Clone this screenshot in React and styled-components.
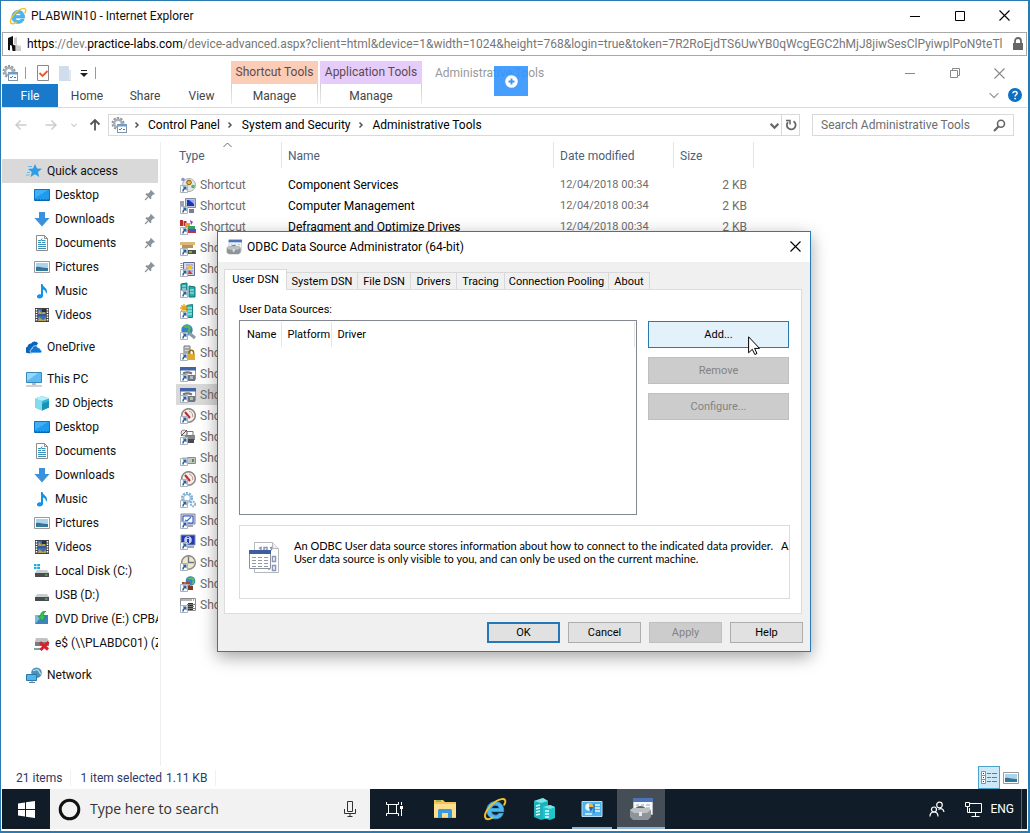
import React from "react";
import styled, { createGlobalStyle, css } from "styled-components";

const ui = `Roboto, "Open Sans", "Liberation Sans", sans-serif`;
const humanist = `"Open Sans", "Noto Sans", sans-serif`;
const narrow = `Lato, "Liberation Sans", sans-serif`;

const GlobalStyle = createGlobalStyle`
  *, *::before, *::after { box-sizing: border-box; }
  body { margin: 0; background: #fff; font: 12px/16px ${ui}; color: #111; }
  button, input { font: inherit; color: inherit; }
  button { padding: 0; border: 0; background: none; }
  a { color: inherit; text-decoration: none; }
  svg { display: block; flex: none; }
`;

/* ---------- browser window ---------- */

const Frame = styled.div`
  position: relative;
  min-height: 100vh;
  display: flex;
  flex-direction: column;
  border: 1px solid #2b7bb0;
  border-right-width: 2px;
  border-bottom-width: 2px;
  padding: 0 1px 2px;
  background: #fff;
  overflow: hidden;
`;

const TitleBar = styled.header`
  display: flex;
  align-items: center;
  height: 31px;
  padding: 0 0 2px 7px;
`;

const WindowTitle = styled.h1`
  flex: 1;
  margin: 0 0 0 4px;
  font: 12px/16px ${ui};
`;

const ButtonSet = styled.div`
  display: flex;
  padding-right: ${(p) => p.$inset || 0}px;
`;

const WindowButton = styled.button`
  width: 45px;
  height: 24px;
  display: grid;
  place-items: center;
  color: ${(p) => p.$color || "#000"};
`;

const UrlBar = styled.div`
  display: flex;
  align-items: center;
  height: 24px;
  padding: 0 1px 0 4px;
  border: 1px solid #a8a8a8;
  color: #777;
`;

const Url = styled.div`
  flex: 1;
  min-width: 0;
  margin: 0 4px;
  overflow: hidden;
  white-space: nowrap;
  line-height: 20px;
  b { font-weight: 400; color: #000; }
`;

/* ---------- explorer: ribbon ---------- */

const Ribbon = styled.div`
  display: flex;
  height: 52px;
  padding-top: 5px;
  border-bottom: 1px solid #dadbdc;
  color: #444;
`;

const RibbonStart = styled.div`
  width: 229px;
  flex: none;
`;

const QuickTools = styled.div`
  display: flex;
  align-items: center;
  height: 23px;
`;

const ToolButton = styled.button`
  width: 16px;
  margin-right: ${(p) => p.$gap || 0}px;
  svg { margin: 0 auto; }
`;

const ToolDivider = styled.span`
  width: 1px;
  height: 12px;
  margin-right: ${(p) => p.$gap || 0}px;
  background: #999;
`;

const TabRow = styled.nav`
  display: flex;
  height: 23px;
`;

const RibbonTab = styled.button`
  width: ${(p) => p.$width}px;
  height: 23px;
  color: #444;
  ${(p) => p.$file && css`background: #1979ca; color: #fff;`}
`;

const ToolGroup = styled.div`
  width: ${(p) => p.$width}px;
  flex: none;
  margin-right: ${(p) => p.$gap}px;
  text-align: center;
`;

const ToolGroupName = styled.div`
  height: 23px;
  line-height: 22px;
  background: ${(p) => p.$tint};
  color: #5b4a4f;
`;

const ToolGroupTab = styled.button`
  width: 100%;
  height: 20px;
  padding-top: 3px;
  color: #444;
  border-left: 1px solid;
  border-right: 1px solid;
  border-image: linear-gradient(#ccc, #eee) 1;
`;

const FolderTitle = styled.div`
  flex: 1;
  line-height: 24px;
  color: #999;
`;

const RibbonEnd = styled.div`
  display: flex;
  flex-direction: column;
  align-items: flex-end;
`;

const RibbonHelp = styled.div`
  display: flex;
  align-items: center;
  gap: 9px;
  height: 20px;
  padding-right: 5px;
  color: #999;
`;

const BadgeButton = styled.button`
  position: absolute;
  left: 493px;
  top: 65px;
  width: 34px;
  height: 30px;
  display: grid;
  place-items: center;
  background: rgba(50, 148, 255, 0.9);
`;

/* ---------- explorer: address row ---------- */

const NavRow = styled.div`
  display: flex;
  align-items: center;
  height: 34px;
  padding: 0 13px 0 13px;
`;

const NavButton = styled.button`
  width: ${(p) => p.$width || 12}px;
  margin-right: ${(p) => p.$gap}px;
  color: ${(p) => p.$color || "#ccc"};
`;

const Breadcrumbs = styled.div`
  flex: 1;
  display: flex;
  align-items: center;
  height: 22px;
  margin-right: 12px;
  padding-left: 2px;
  border: 1px solid #d9d9d9;
  color: #000;
  svg + svg { margin: 0 7px 0 6px; }
  a + svg { margin: 0 8px 0 6px; }
  button { color: #666; }
`;

const Spacer = styled.span`
  flex: 1;
`;

const Refresh = styled.button`
  width: 18px;
  height: 20px;
  display: grid;
  place-items: center;
  margin-left: 2px;
  border-left: 1px solid #d9d9d9;
`;

const SearchBox = styled.label`
  display: flex;
  align-items: center;
  width: 202px;
  height: 22px;
  padding: 0 7px 0 8px;
  border: 1px solid #d9d9d9;
  color: #666;
`;

const SearchInput = styled.input`
  flex: 1;
  min-width: 0;
  padding: 0;
  border: 0;
  outline: 0;
  background: none;
  font: ${(p) => (p.$large ? `14px/20px ${humanist}` : `12px/16px ${ui}`)};
  &::placeholder { color: ${(p) => (p.$large ? "#333" : "#6d6d6d")}; opacity: 1; }
`;

/* ---------- explorer: body ---------- */

const Panes = styled.main`
  flex: 1;
  display: flex;
  min-height: 0;
`;

const Sidebar = styled.nav`
  width: 159px;
  flex: none;
  padding: 17px 2px 0 0;
  border-right: 1px solid #eee;
`;

const Branch = styled.ul`
  list-style: none;
  margin: 0 0 8px;
  padding: 0;
`;

const Place = styled.a`
  display: flex;
  align-items: center;
  gap: 5px;
  height: 24px;
  padding-left: ${(p) => (p.$nested ? 32 : 24)}px;
  padding-right: ${(p) => (p.$pinned ? 2 : 0)}px;
  white-space: nowrap;
  overflow: hidden;
  background: ${(p) => (p.$current ? "#d9d9d9" : "none")};
  span { flex: 1; min-width: 0; overflow: hidden; }
`;

const ListPane = styled.section`
  flex: 1;
  min-width: 0;
  padding-left: 15px;
`;

const FileTable = styled.table`
  table-layout: fixed;
  width: 578px;
  border-collapse: collapse;
`;

const ColumnHead = styled.th`
  position: relative;
  width: ${(p) => p.$width}px;
  height: 32px;
  padding: 0 7px 4px ${(p) => p.$inset || 6}px;
  text-align: left;
  font-weight: 400;
  color: #4c607a;
  background: linear-gradient(#e5e5e5, #e5e5e5) right 0 / 1px 26px no-repeat;
`;

const SortMark = styled.svg`
  position: absolute;
  left: 47px;
  top: 0;
`;

const FileRow = styled.tr`
  background: ${(p) => (p.$selected ? "#d9d9d9" : "none")};
`;

const Cell = styled.td`
  height: 21px;
  padding: 0 7px 0 6px;
  color: ${(p) => (p.$strong ? "#000" : "#6d6d6d")};
  text-align: ${(p) => p.$align || "left"};
  font-size: ${(p) => (p.$compact ? 11 : 12)}px;
`;

const TypeCell = styled.td`
  height: 21px;
  padding: 0 0 0 4px;
  color: #6d6d6d;
  div { display: flex; align-items: center; gap: 4px; }
`;

const StatusBar = styled.footer`
  display: flex;
  align-items: center;
  height: 23px;
  padding: 0 5px 0 14px;
  color: #2b3a66;
`;

const StatusText = styled.span`
  padding-right: ${(p) => (p.$bare ? 3 : 8)}px;
  margin-right: ${(p) => p.$gap || 0}px;
  border-right: 1px solid ${(p) => (p.$bare ? "transparent" : "#f0f0f0")};
`;

const ViewButton = styled.button`
  display: grid;
  place-items: center;
  width: 22px;
  height: 23px;
  ${(p) => p.$on && css`border: 1px solid #4ba3cc; background: #cde9f7;`}
`;

/* ---------- taskbar ---------- */

const Taskbar = styled.div`
  display: flex;
  height: 40px;
  background: #101d29;
  color: #fff;
`;

const TaskButton = styled.button`
  display: grid;
  place-items: center;
  width: ${(p) => p.$width || 49}px;
  height: 40px;
  background: ${(p) => (p.$active ? "#454d57" : "none")};
  ${(p) => p.$open && css`box-shadow: inset 0 -2px #8fb8d8;`}
  ${(p) => p.$open && !p.$active && css`margin: 0 5px 0 4px;`}
`;

const TaskSearch = styled.label`
  display: flex;
  align-items: center;
  gap: 9px;
  width: 320px;
  padding: 0 12px 0 8px;
  background: #f2f2f2;
  color: #333;
`;

const Tray = styled.div`
  flex: 1;
  display: flex;
  align-items: center;
  justify-content: flex-end;
  padding-right: 5px;
  gap: 20px;
  span { margin-left: -12px; padding-right: 7px; border-right: 1px solid #59636c; line-height: 40px; }
`;

/* ---------- ODBC dialog ---------- */

const Dialog = styled.section`
  position: absolute;
  left: 216px;
  top: 230px;
  width: 594px;
  border: 1px solid #2a7ab8;
  background: #f0f0f0;
  box-shadow: 0 5px 16px rgba(0, 0, 0, 0.36);
  font: 11px/13px ${ui};
  color: #000;
`;

const DialogHeader = styled.header`
  display: flex;
  align-items: center;
  height: 30px;
  padding: 0 0 1px 8px;
  background: #fff;
`;

const DialogTitle = styled.h2`
  flex: 1;
  margin: 0 0 0 5px;
  font: 12px/16px ${ui};
`;

const DialogClose = styled.button`
  width: 30px;
  height: 28px;
  display: grid;
  place-items: center;
`;

const DialogBody = styled.div`
  padding: 7px 8px 8px 6px;
`;

const Tabs = styled.div`
  display: flex;
  align-items: flex-end;
  height: 20px;
`;

const Tab = styled.button`
  width: ${(p) => p.$width}px;
  height: 17px;
  border: 1px solid #d9d9d9;
  border-width: 1px 1px 0 0;
  background: #f0f0f0;
  ${(p) => p.$active && css`
    height: 21px;
    margin-bottom: -1px;
    padding-bottom: 2px;
    border-left-width: 1px;
    background: #fff;
    z-index: 1;
  `}
`;

const TabPanel = styled.div`
  padding: 12px 11px 14px 14px;
  border: 1px solid #dcdcdc;
  background: #fff;
`;

const PanelLabel = styled.div`
  margin-bottom: 3px;
  line-height: 15px;
`;

const SourceArea = styled.div`
  display: flex;
  gap: 11px;
`;

const SourceList = styled.div`
  flex: 1;
  height: 195px;
  padding: 1px;
  border: 1px solid #828790;
`;

const SourceTable = styled.table`
  width: 100%;
  table-layout: fixed;
  border-collapse: collapse;
`;

const SourceHead = styled.th`
  width: ${(p) => p.$width}px;
  height: 25px;
  padding: 0 0 0 6px;
  border-right: 1px solid #e5e5e5;
  text-align: left;
  font-weight: 400;
`;

const ActionColumn = styled.div`
  display: flex;
  flex-direction: column;
  gap: 9px;
  width: 142px;
  padding: 1px 1px 0 0;
`;

const PushButton = styled.button`
  width: ${(p) => (p.$small ? "73px" : "100%")};
  height: ${(p) => (p.$small ? 21 : 27)}px;
  border: 1px solid #adadad;
  background: #e1e1e1;
  &:disabled { background: #ccc; border-color: #bfbfbf; color: #838383; }
  ${(p) => p.$hot && css`border-color: #2a7ab0; background: #e3f1fb;`}
  ${(p) => p.$primary && css`border: 2px solid #2478b5;`}
`;

const Info = styled.div`
  display: flex;
  gap: 14px;
  height: 74px;
  margin-top: 10px;
  padding: 13px 8px;
  border: 1px solid #dcdcdc;
  p { margin: 0; white-space: pre; font-family: ${narrow}; }
  svg { margin-top: 3px; }
`;

const DialogActions = styled.div`
  display: flex;
  justify-content: flex-end;
  gap: 8px;
  padding-top: 8px;
  margin-right: -1px;
`;

const Pointer = styled.svg`
  position: absolute;
  left: 530px;
  top: 104px;
`;

/* ---------- icons ---------- */

const Icon = ({ size = 16, box = 16, children, ...rest }) => (
  <svg width={size} height={size} viewBox={`0 0 ${box} ${box}`} fill="none" aria-hidden="true" {...rest}>
    {children}
  </svg>
);

const IeIcon = ({ size = 18 }) => (
  <Icon size={size} box={24}>
    <path d="M20.6 14.6H8.4c.3 2.300 1.800 3.600 4 3.600 1.600 0 2.800-.6 3.500-1.800h4.300c-1.200 3.600-4.100 5.400-7.900 5.400-5 0-8.400-3.400-8.400-8.500 0-5 3.500-8.600 8.500-8.600 5.200 0 8.400 3.500 8.300 9.900zM8.500 11.500h7.700c-.2-2.100-1.600-3.300-3.700-3.300-2.200 0-3.600 1.200-4 3.300z" fill="#4db9ef" stroke="#3a9fdb" strokeWidth="1" />
    <path d="M3 21.500C-.8 18 6.500 8.200 13 4.300c4-2.400 8-3 9-1.300.7 1.200.2 3.100-.8 4.800" stroke="#f3c22b" strokeWidth="1.900" strokeLinecap="round" />
    <path d="M3 21.500c1.500 1.300 4 .6 6.500-1" stroke="#f3c22b" strokeWidth="1.900" strokeLinecap="round" />
  </Icon>
);

const SiteIcon = () => (
  <Icon>
    <path d="M1 2l5-2v15l-5-1z" fill="#111" />
    <path d="M3 9l3 1v5H3z" fill="#fff" />
    <path d="M4.500 8l4 1.500V15h-3z" fill="#111" />
    <path d="M7 2l3-1v8l4 1v5H9V8.500L7 8z" fill="#ccc" />
  </Icon>
);

const LockIcon = () => (
  <Icon size={14} box={14}>
    <path d="M4 6V4a3 3 0 016 0v2" stroke="#666" strokeWidth="1.800" />
    <rect x="2" y="6" width="10" height="7" fill="#666" />
  </Icon>
);

const MinimizeIcon = () => <Icon size={10} box={10}><path d="M0 5.500h10" stroke="currentColor" /></Icon>;
const MaximizeIcon = () => <Icon size={10} box={10}><path d="M.5.5h9v9h-9z" stroke="currentColor" /></Icon>;
const RestoreIcon = () => <Icon size={10} box={10}><path d="M.5 2.500h7v7h-7zM2.500 2.500v-2h7v7h-2" stroke="currentColor" /></Icon>;
const CloseIcon = () => <Icon size={11} box={11}><path d="M.5.5l10 10M10.500.5l-10 10" stroke="currentColor" strokeWidth="1.100" /></Icon>;

const AdminToolsIcon = () => (
  <Icon>
    <circle cx="7" cy="6.500" r="5" stroke="#8f989f" strokeWidth="3" strokeDasharray="2 1.140" />
    <circle cx="7" cy="6.500" r="3.800" stroke="#a9b1b7" strokeWidth="2.500" fill="#fff" />
    <rect x="6.500" y="7.500" width="9" height="8" fill="#fff" stroke="#7f95ac" />
    <path d="M6 8.500h10" stroke="#6f9fd0" strokeWidth="2" />
    <path d="M8 12l1 1 2-2M12 12.500h2" stroke="#3d78b8" />
  </Icon>
);

const PropertiesIcon = () => (
  <Icon>
    <path d="M2.500.5h11v15h-11z" fill="#fff" stroke="#8a8a8a" />
    <path d="M4.500 8l3 3 5-5" stroke="#e8572a" strokeWidth="1.800" />
  </Icon>
);

const NewFolderIcon = () => (
  <Icon><path d="M2 1h9l1 1v11l2 1v2H2z" fill="#cfdded" /><path d="M12 5h2v10h-2z" fill="#dfe8f2" /></Icon>
);

const CustomizeIcon = () => (
  <Icon size={8} box={8}><path d="M1 1.500h6" stroke="#222" /><path d="M0 4h8L4 8z" fill="#222" /></Icon>
);

const ArrowIcon = ({ turn = 0, weight = 1.5 }) => (
  <Icon size={12} box={12}>
    <path d="M11.500 6H1M5.500 1.500L1 6l4.500 4.500" stroke="currentColor" strokeWidth={weight} transform={`rotate(${turn} 6 6)`} />
  </Icon>
);

const ChevronIcon = ({ side, weight = 1.5, size = 8 }) => (
  <Icon size={size} box={8}>
    <path d={side ? "M2.500 1.500L5 4 2.500 6.500" : "M.5 2.500L4 6l3.500-3.500"} stroke={side ? "#555" : "currentColor"} strokeWidth={weight} />
  </Icon>
);

const RefreshIcon = () => (
  <Icon size={12} box={12}><path d="M8.500 2.200A4.400 4.400 0 1 1 3 3" stroke="currentColor" strokeWidth="1.800" /><path d="M1 1.500h4v4" stroke="currentColor" strokeWidth="1.500" /></Icon>
);

const SearchIcon = () => (
  <Icon size={13} box={13}><circle cx="8" cy="4.700" r="3.500" stroke="#666" strokeWidth="1.600" /><path d="M5.500 7.500l-4.500 4.500" stroke="#666" strokeWidth="2.200" /></Icon>
);

const HelpIcon = () => (
  <Icon size={14} box={14}>
    <circle cx="7" cy="7" r="7" fill="#0e70c4" />
    <path d="M4.900 5.300c.1-2.500 4.300-2.400 4.200 0 0 1.500-2 1.500-2 3.200" stroke="#fff" strokeWidth="1.500" />
    <circle cx="7.100" cy="10.600" r=".9" fill="#fff" />
  </Icon>
);

const PlusIcon = () => (
  <Icon size={13} box={13}><circle cx="6.500" cy="6.500" r="6.300" fill="#fff" /><path d="M6.500 3.500v6M3.500 6.500h6" stroke="#3b97f5" strokeWidth="1.800" /></Icon>
);

const StarIcon = () => (
  <Icon><path d="M9 1l2 4.500 5 .2-4 3.200 1.200 5L9 11.300 4.500 14l1.300-5L2 6l5-.4z" fill="#2f9de4" /><path d="M1 9.500h3M0 12h3.500M2 3.500h4" stroke="#63b8ee" /></Icon>
);

const DesktopIcon = () => (
  <Icon><path d="M.5 2.500h15v11H.5z" fill="#1f9bee" stroke="#0b74c4" /><path d="M1 13h14" stroke="#0a4e86" strokeDasharray="2 1" /><path d="M1 11l13-8H1z" fill="#3fb0f7" /></Icon>
);

const DownloadsIcon = () => (
  <Icon><path d="M5 1h6v6h4.500L8 15.500.5 7H5z" fill="#3b92dc" /></Icon>
);

const DocumentsIcon = () => (
  <Icon>
    <path d="M2.500.5h8l3 3v12h-11z" fill="#fff" stroke="#8c8c8c" />
    <path d="M10.500.5v3h3" stroke="#8c8c8c" />
    <path d="M4 5.500h2M7.500 5.500h4M4 7.500h3M8 7.500h3.500M4 9.500h8M4 11.500h8M4 13.500h8" stroke="#3b8fb8" />
    <path d="M6 6.500l2-3" stroke="#3b8fb8" />
  </Icon>
);

const PicturesIcon = () => (
  <Icon>
    <path d="M.5 2.500h15v11H.5z" fill="#fff" stroke="#9a9a9a" />
    <path d="M2 4h12v8H2z" fill="#a8d4ee" />
    <path d="M2 8c4-1 7 1.500 12 1v3H2z" fill="#426e8b" />
    <path d="M2 10.500c4-1 8 0 12 0V12H2z" fill="#2a7ca0" />
  </Icon>
);

const MusicIcon = () => (
  <Icon><path d="M7 1h1.500c.5 3 4.500 3.500 4.500 7.500 0 1-.5 2-1 2.500 0-3-1.500-4-3-4.500V13c0 1.500-1.700 2.500-3.500 2.500S2.500 14.500 3 13c.5-1.400 2.500-2 4-1.500z" fill="#1592e6" /></Icon>
);

const VideosIcon = () => (
  <Icon>
    <path d="M1 1h14v14H1z" fill="#444" />
    <path d="M2.500 2v12M13.500 2v12" stroke="#fff" strokeWidth="1.500" strokeDasharray="1.500 1" />
    <path d="M4 2h8v5.500H4zM4 8.500h8V14H4z" fill="#3c6fb8" />
    <path d="M5 3l3 3 3-3v4H4zM5 10l4 3 3-2v3H4z" fill="#b7a04e" />
    <path d="M8 2h4v3H8z" fill="#202f58" />
  </Icon>
);

const OneDriveIcon = () => (
  <Icon>
    <path d="M6 13.500H2.500a2.500 2.500 0 01-.3-5C2 6 4 5 5.500 5.300 6.500 3 10 2.500 11.500 5" stroke="#0a64b8" strokeWidth="1.500" fill="#0a64b8" />
    <path d="M6 14c-2.500 0-2.500-3.800 0-4 0-3.500 5-4.500 6-1.200 1.600-.3 2.600.7 2.400 2 2 .5 1.900 3.200-.2 3.200z" fill="#0f78d4" stroke="#fff" strokeWidth=".7" />
  </Icon>
);

const ThisPcIcon = () => (
  <Icon><path d="M.5 1.500h15v10H.5z" fill="#5cbcf2" stroke="#3a86b8" /><path d="M1 10l11-8H1z" fill="#93d8fb" /><path d="M6 12h4v2H6z" fill="#b4bcc2" /><path d="M0 15h16" stroke="#9aa5ac" /></Icon>
);

const ObjectsIcon = () => (
  <Icon><path d="M8 1l7 2.500v9L8 15.500 1 12.500v-9z" fill="#2eb6d4" /><path d="M1 3.500L8 6v9.500L1 12.500z" fill="#82dcec" /><path d="M8 1l7 2.500L8 6 1 3.500z" fill="#b8eef6" /><path d="M8 9l7-3v6.500l-7 3z" fill="#1594b6" /></Icon>
);

const driveBody = (
  <>
    <path d="M3 7h10l2 3H1z" fill="#c9cdd0" />
    <path d="M1 10h14v4H1z" fill="#484d50" />
    <path d="M11 12h2.500" stroke="#5fe06c" />
  </>
);

const LocalDiskIcon = () => (
  <Icon>{driveBody}<path d="M0 1h2.500v2H0zM3.200 1h2.800v2H3.200zM0 3.700h2.500V6H0zM3.200 3.700h2.800V6H3.200z" fill="#17b0d8" /></Icon>
);
const UsbIcon = () => <Icon>{driveBody}</Icon>;
const DvdIcon = () => (
  <Icon><path d="M1 4h13v9H1z" fill="#3e83bd" /><path d="M1 13l8-9H1z" fill="#7cb9e4" /><path d="M12 0C8 0 6.500 2 6.500 5H4l4 5 4-5H9.500c0-2 .8-3.500 2.500-5z" fill="#35c25a" stroke="#158a38" strokeWidth=".6" /></Icon>
);
const NetDriveIcon = () => (
  <Icon><path d="M2 3h11l2 3v5H1V6z" fill="#bfc3c6" /><path d="M1 7h14v4H1z" fill="#777d80" /><path d="M0 14h8" stroke="#7aa8a0" strokeWidth="2" /><path d="M6 7.500l8 7M14.500 7l-8 8" stroke="#d8202e" strokeWidth="3" /></Icon>
);
const NetworkIcon = () => (
  <Icon><circle cx="10.500" cy="5.800" r="5.300" fill="#4d8fb5" /><path d="M7 3c2 2 3-2 5 0s1 3 3 4" stroke="#a9d9ec" strokeWidth="1.500" /><path d="M.5 7.500h10v6H.5z" fill="#54b5ee" stroke="#2a78a8" /><path d="M3 15.500h6M6 13.500v2" stroke="#5f8499" /></Icon>
);
const PinIcon = () => (
  <Icon size={12} box={12}><path d="M7 1l4 4-1 .6-.8-.2-2 2 .2 2-1 .8-5-5 .9-1 2 .2 2-2-.2-.8z" fill="#8a939a" /><path d="M4 8l-3 3" stroke="#8a939a" strokeWidth="1.200" /></Icon>
);

/* Artwork of each administrative tool, under the shortcut arrow. */
const toolArt = {
  services: <><circle cx="9" cy="8" r="6.500" fill="#e3e6e2" stroke="#a9b0ab" /><circle cx="9" cy="5.500" r="2.300" fill="#e9b52c" stroke="#7d5f18" /><circle cx="3" cy="2.500" r="1.800" fill="#8c8fd6" /><circle cx="13" cy="9.500" r="1.800" fill="#53b35a" /></>,
  computer: <><path d="M5.500.5h10v9h-10z" fill="#bfc6da" stroke="#848ba6" /><path d="M7 2h7v6H7z" fill="#1c35b5" /><path d="M9 2h5v4z" fill="#8fa8f0" /><path d="M0 3h4v8H0z" fill="#9ba3b8" /><path d="M9 11h5v4H9z" fill="#777f90" /></>,
  defrag: <><path d="M0 1h3v6H0zM3.500 2h3v5h-3z" fill="#b52f2f" /><path d="M5 4h5v4H5z" fill="#e8a02c" /><path d="M10 1l3 2-2 3z" fill="#9a33b0" /><path d="M8 7h7v3H8z" fill="#3e9e62" /><path d="M8 10h8v4H8z" fill="#c03348" /><path d="M9 11.500h6" stroke="#3d56c4" strokeWidth="1.500" /></>,
  cleanup: <><path d="M0 2h15v3H0z" fill="#d9b878" /><path d="M2 5h11v3H2z" fill="#b89354" /><path d="M7 10h9v4H7z" fill="#4e5444" /><path d="M9 12h3" stroke="#9ccd3a" strokeWidth="1.500" /></>,
  events: <><path d="M3.500 1.500h11v13h-11z" fill="#d3d7ea" stroke="#626a94" /><path d="M6 4h7M6 7h7M6 10h7" stroke="#7f88b6" /><circle cx="10" cy="6" r="2.300" fill="#f2c12e" /><path d="M9 9l4 4H8z" fill="#d43a2b" /><path d="M1.500 2v12" stroke="#7781a0" strokeDasharray="1 1" strokeWidth="2" /></>,
  iscsi: <><path d="M1 2l6-1v12H1zM9 4l6 1v10H9z" fill="#28a9ab" stroke="#0f7274" /><path d="M2 4h4M2 7h4M10 8h4M10 11h4" stroke="#bdf4f0" /></>,
  policy: <><path d="M6.500 2.500l6-1v13h-6z" fill="#33b9b6" stroke="#15807f" /><path d="M8 5h4M8 8h4M8 11h4" stroke="#c8f6f2" /><path d="M4 1v8M0 5h8M1.200 2.200l5.600 5.600M6.800 2.200L1.200 7.800" stroke="#e2a51c" strokeWidth="1.300" /></>,
  web: <><circle cx="7" cy="6" r="5.700" fill="#2f86c2" /><path d="M4 2c3 2 3-1 5 1s-1 3 0 5" stroke="#59b452" strokeWidth="2.500" /><path d="M9 9l6 5" stroke="#909aa2" strokeWidth="3" /></>,
  security: <><path d="M4 1h6v9H4z" fill="#d6d9dc" stroke="#6c7277" /><path d="M5 4h4M5 7h4" stroke="#6c7277" /><path d="M9 9V7.500a2.300 2.300 0 014.600 0V9" stroke="#94700f" strokeWidth="1.500" /><path d="M8 9h7v6H8z" fill="#e0aa2f" /></>,
  odbc: <><path d="M.5 1.500h15v12H.5z" fill="#fff" stroke="#8f98ab" /><path d="M0 1h16v3.500H0z" fill="#3f65a8" /><path d="M3 7.500c3-1.500 6-1.500 9 0" stroke="#777" strokeWidth="2" /><path d="M7 9h8v6H7z" fill="#70777e" /><path d="M10 10h3v3h-3z" fill="#b4bac0" /></>,
  gauge: <><circle cx="8.500" cy="7.500" r="6.800" fill="#f2efec" stroke="#8d8780" strokeWidth="1.500" /><path d="M5 4l5 6" stroke="#c4282c" strokeWidth="2" /><path d="M9 3c3 1 4 3 3.500 6" stroke="#c99" /></>,
  printer: <><path d="M5 6h10v5H5z" fill="#86898b" /><path d="M7 2.500h6v4H7z" fill="#fff" stroke="#777" /><path d="M8 10h6v4H8z" fill="#444c50" /><circle cx="4" cy="4" r="3" fill="#e8e8e8" stroke="#868686" /><path d="M1 7l6-6" stroke="#555" /></>,
  recovery: <><path d="M2 7h7l2 2v4H2z" fill="#d7dad8" /><path d="M7.500 7.500h8v6h-8z" fill="#c2c7c3" stroke="#888f8a" /><path d="M12 9h2v3h-2z" fill="#4e9650" /></>,
  gears: <><circle cx="7" cy="6" r="4.800" stroke="#7baed4" strokeWidth="2.500" strokeDasharray="2 1" /><circle cx="7" cy="6" r="3.300" stroke="#8dbbdc" strokeWidth="1.200" /><circle cx="13" cy="12" r="2.200" stroke="#7baed4" strokeWidth="2" strokeDasharray="1.500 .8" /></>,
  monitor: <><path d="M1 1h14v10H1z" fill="#cfd5e4" stroke="#7e86a0" /><path d="M3 3h10v7H3z" fill="#fff" stroke="#2540c0" /><path d="M5 7l2 1 4-4" stroke="#287ad4" strokeWidth="1.300" /><path d="M7 12h6v2H7z" fill="#9fa5b2" /></>,
  info: <><path d="M1 1h14v10H1z" fill="#2038b4" stroke="#8890a8" /><circle cx="8" cy="6" r="3.800" fill="#bfd1f8" /><path d="M8 5v4M8 3v1" stroke="#1a2da0" strokeWidth="1.800" /><path d="M7 12h7v2H7z" fill="#9fa5b2" /></>,
  clock: <><circle cx="8.500" cy="7.500" r="6.800" fill="#f5e8c0" stroke="#8d8d8d" strokeWidth="1.500" /><path d="M8.500 1.500v6h5.500" stroke="#5f7590" strokeWidth="1.300" /></>,
  firewall: <><circle cx="10.500" cy="5" r="4.800" fill="#3285c9" /><path d="M8 2c3 2 3-1 5 1s-1 3 0 5" stroke="#65bc55" strokeWidth="2" /><path d="M2 6h8v7H2z" fill="#a5492f" /><path d="M2 8.500h8M2 11h8M5 6v2M8 9v2" stroke="#dcb3a0" strokeWidth=".7" /><path d="M8 10h5v4H8z" fill="#863721" /></>,
  memory: <><path d="M.5 1.500h15v12H.5z" fill="#fff" stroke="#8a8a8a" /><path d="M1 3h11" stroke="#b5b5b5" strokeWidth="2" /><path d="M13 3h1" stroke="#555" /><path d="M8 6h5v7H8z" fill="#333" /><path d="M7 7.500h8M7 9.500h7M7 11.500h8" stroke="#777" /></>,
};

const ShortcutIcon = ({ kind }) => (
  <Icon>
    {toolArt[kind]}
    <path d="M.5 8.500h7v7h-7z" fill="#fff" stroke="#aab2bb" />
    <path d="M2.500 9.500h4v4l-1.300-1.300c-1 .4-1.400 1-1.400 2.300H2.300c0-1.800.4-2.800 1.600-3.600z" fill="#2b5f9e" />
  </Icon>
);

const ToolboxIcon = ({ size = 16 }) => (
  <Icon size={size} box={24}>
    <path d="M4.500 1.500h19v16h-19z" fill="#f7f8fb" stroke="#b7bcc9" />
    <path d="M4 1h20v4H4z" fill="#4c74b6" />
    <path d="M7 8h3M12 8h3M17 8h4M7 11h3M17 11h4M17 14h4" stroke="#9ba7bd" />
    <path d="M7 13c1-4 8-4 9 0" stroke="#5f666b" strokeWidth="2" />
    <path d="M1 13l3-2h14l4 2v7l-3 3H4l-3-3z" fill="#8e9498" />
    <path d="M1 13l3-2h14l4 2-4 3H5z" fill="#bcc1c4" />
    <path d="M10 15h3v4h-3z" fill="#e6e8ea" />
  </Icon>
);

const DataSourceIcon = () => (
  <Icon size={32} box={32}>
    <path d="M6.500.5h18l6 6v24h-24z" fill="#fff" stroke="#b5b8bd" />
    <path d="M24.500.5v6h6" fill="#eee" stroke="#b5b8bd" />
    <path d="M11 6.500l2-1v3M16 5.500h3v3h-3zM22 6l1.500-.5v3M24.500 14.500h3v5h-3zM24.500 23.500h3v5h-3zM21 24v4" stroke="#8996b8" strokeWidth="1.500" />
    <path d="M1.500 8.500h21v18h-21z" fill="#fff" stroke="#8a91a0" />
    <path d="M1 8h22v4H1z" fill="#3f5f9c" />
    <path d="M4 15.500h17M4 18.500h17M4 21.500h17M4 24.500h17" stroke="#9299a8" strokeDasharray="4 2" />
  </Icon>
);

const WindowsIcon = () => (
  <Icon size={17} box={17}><path d="M0 2.500l7-1V8H0zM8 1.300L17 0v8H8zM0 9h7v6.500l-7-1zM8 9h9v8l-9-1.300z" fill="#fff" /></Icon>
);
const CortanaIcon = () => <Icon size={23} box={23}><circle cx="11.500" cy="11.500" r="9.300" stroke="#111" strokeWidth="3" /></Icon>;
const MicIcon = () => (
  <Icon size={16}><path d="M5.500.5h5v10h-5zM2.500 8v4.500h11V8M8 12.500v3M5.500 15.500h5" stroke="#333" /></Icon>
);
const TaskViewIcon = () => (
  <Icon size={17} box={17}><path d="M2.500 3.500h8v9h-8zM.5 1v2.500h12V1M.5 15v-2.500h12V15M15.500 1v3M15.500 8v7" stroke="#fff" /><path d="M14 5h3v3h-3z" fill="#fff" /></Icon>
);
const FolderIcon = () => (
  <Icon size={22} box={22}><path d="M0 2h9l2 2h11v16H0z" fill="#f2c75a" /><path d="M0 6h22v13H0z" fill="#ffdf8d" /><path d="M4 20v-8l1-1h12l1 1v8h-4v-5H8v5z" fill="#3a9bdc" /><path d="M2 3h5" stroke="#4c9a64" /></Icon>
);
const ServerIcon = () => (
  <Icon size={22} box={22}><path d="M1 3l9-3 5 3v17l-7 2-7-3z" fill="#1db3bd" /><path d="M10 9l7-2 5 2v11l-5 2-7-2z" fill="#22c3cb" /><path d="M1 3l9-3 5 3-7 2zM10 9l7-2 5 2-5 2z" fill="#7ae6e6" /><path d="M3 8l4-1M3 11l4-1M3 14l4-1M3 17l4-1M12 13l4 0M12 16h4M12 19h4" stroke="#e0ffff" strokeWidth="1.500" /></Icon>
);
const ControlPanelIcon = () => (
  <Icon size={22} box={22}><path d="M1 3.500h20v15H1z" fill="#4fb2ea" stroke="#b6e0f7" /><circle cx="8" cy="9" r="3.800" fill="#e8f6ff" /><path d="M8 9V5a4 4 0 014 4z" fill="#f2b43a" /><path d="M8 9h4a4 4 0 01-3 4z" fill="#1f67b5" /><path d="M14 7h5M14 10h5M14 13h5M4 16h7" stroke="#e8f6ff" strokeWidth="1.300" /><path d="M13 6v9" stroke="#1f67b5" /></Icon>
);
const PeopleIcon = () => (
  <Icon><circle cx="10.500" cy="4" r="2.800" stroke="#fff" strokeWidth="1.200" /><circle cx="5" cy="8.500" r="2.500" stroke="#fff" strokeWidth="1.200" /><path d="M1 15.500c0-6 8-6 8 0M9.500 8.500c3-2 5 0 5.500 2.500" stroke="#fff" strokeWidth="1.200" /></Icon>
);
const NetTrayIcon = () => (
  <Icon size={17} box={17}><path d="M5 2.500h11.500v9H4.500V7M10.500 11.500v4M6.500 15.500h8" stroke="#fff" /><path d="M.5 1.500h4v4h-4zM2.500 6v5.500h3" stroke="#fff" /></Icon>
);
const DetailsIcon = () => (
  <Icon><path d="M.5 1.500h4v4h-4zM.5 5.500h4v4h-4zM.5 9.500h4v4h-4z" fill="#fff" stroke="#8a8f93" /><path d="M2.500 3v1M2.500 7v1M2.500 11v1" stroke="#333" /><path d="M6 3.500h4M11 3.500h5M6 7.500h4M11 7.500h5M6 11.500h4M11 11.500h5" stroke="#6b7a84" /></Icon>
);

/* ---------- data ---------- */

const branches = [
  [
    { name: "Quick access", icon: StarIcon, root: true, current: true },
    { name: "Desktop", icon: DesktopIcon, pinned: true },
    { name: "Downloads", icon: DownloadsIcon, pinned: true },
    { name: "Documents", icon: DocumentsIcon, pinned: true },
    { name: "Pictures", icon: PicturesIcon, pinned: true },
    { name: "Music", icon: MusicIcon },
    { name: "Videos", icon: VideosIcon },
  ],
  [{ name: "OneDrive", icon: OneDriveIcon, root: true }],
  [
    { name: "This PC", icon: ThisPcIcon, root: true },
    { name: "3D Objects", icon: ObjectsIcon },
    { name: "Desktop", icon: DesktopIcon },
    { name: "Documents", icon: DocumentsIcon },
    { name: "Downloads", icon: DownloadsIcon },
    { name: "Music", icon: MusicIcon },
    { name: "Pictures", icon: PicturesIcon },
    { name: "Videos", icon: VideosIcon },
    { name: "Local Disk (C:)", icon: LocalDiskIcon },
    { name: "USB (D:)", icon: UsbIcon },
    { name: "DVD Drive (E:) CPBA", icon: DvdIcon },
    { name: "e$ (\\\\PLABDC01) (Z", icon: NetDriveIcon },
  ],
  [{ name: "Network", icon: NetworkIcon, root: true }],
];

const stamp = "12/04/2018 00:34";
const files = [
  { kind: "services", name: "Component Services", date: stamp, size: "2 KB" },
  { kind: "computer", name: "Computer Management", date: stamp, size: "2 KB" },
  { kind: "defrag", name: "Defragment and Optimize Drives", date: stamp, size: "2 KB" },
  ..."cleanup events iscsi policy web security odbc odbc gauge printer recovery gauge gears monitor info clock firewall memory"
    .split(" ")
    .map((kind, i) => ({ kind, selected: i === 7 })),
];

const tabs = [
  ["User DSN", 63], ["System DSN", 71], ["File DSN", 53], ["Drivers", 46],
  ["Tracing", 48], ["Connection Pooling", 104], ["About", 41],
];

const infoText =
  "An ODBC User data source stores information about how to connect to the indicated data provider.   A\nUser data source is only visible to you, and can only be used on the current machine.";

/* ---------- page ---------- */

function WindowButtons({ color, restored, inset }) {
  return (
    <ButtonSet $inset={inset}>
      <WindowButton $color={color} aria-label="Minimize"><MinimizeIcon /></WindowButton>
      <WindowButton $color={color} aria-label={restored ? "Restore" : "Maximize"}>
        {restored ? <RestoreIcon /> : <MaximizeIcon />}
      </WindowButton>
      <WindowButton $color={color} aria-label="Close"><CloseIcon /></WindowButton>
    </ButtonSet>
  );
}

function ExplorerRibbon() {
  return (
    <Ribbon>
      <RibbonStart>
        <QuickTools>
          <ToolButton $gap={7} aria-label="Administrative Tools"><AdminToolsIcon /></ToolButton>
          <ToolDivider $gap={9} />
          <ToolButton $gap={6} aria-label="Properties"><PropertiesIcon /></ToolButton>
          <ToolButton $gap={3} aria-label="New folder"><NewFolderIcon /></ToolButton>
          <ToolButton $gap={3} aria-label="Customize toolbar"><CustomizeIcon /></ToolButton>
          <ToolDivider />
        </QuickTools>
        <TabRow>
          <RibbonTab $width={56} $file>File</RibbonTab>
          <RibbonTab $width={58}>Home</RibbonTab>
          <RibbonTab $width={58}>Share</RibbonTab>
          <RibbonTab $width={55}>View</RibbonTab>
        </TabRow>
      </RibbonStart>
      <ToolGroup $width={87} $gap={2}>
        <ToolGroupName $tint="#fbcdb6">Shortcut Tools</ToolGroupName>
        <ToolGroupTab>Manage</ToolGroupTab>
      </ToolGroup>
      <ToolGroup $width={102} $gap={13}>
        <ToolGroupName $tint="#e6ccfb">Application Tools</ToolGroupName>
        <ToolGroupTab>Manage</ToolGroupTab>
      </ToolGroup>
      <FolderTitle>Administrative Tools</FolderTitle>
      <RibbonEnd>
        <WindowButtons color="#888" restored inset={5} />
        <RibbonHelp>
          <ChevronIcon size={10} weight={1} />
          <button aria-label="Help"><HelpIcon /></button>
        </RibbonHelp>
      </RibbonEnd>
    </Ribbon>
  );
}

function AddressRow() {
  return (
    <NavRow>
      <NavButton $gap={18} aria-label="Back"><ArrowIcon /></NavButton>
      <NavButton $gap={14} aria-label="Forward"><ArrowIcon turn={180} /></NavButton>
      <NavButton $gap={10} $width={8} aria-label="Recent locations"><ChevronIcon size={6} /></NavButton>
      <NavButton $gap={5} $width={14} $color="#555" aria-label="Up"><ArrowIcon turn={90} weight={1.8} /></NavButton>
      <Breadcrumbs>
        <AdminToolsIcon />
        <ChevronIcon side />
        <a href="#control-panel">Control Panel</a>
        <ChevronIcon side />
        <a href="#security">System and Security</a>
        <ChevronIcon side />
        <a href="#tools">Administrative Tools</a>
        <Spacer />
        <button aria-label="Previous locations"><ChevronIcon size={9} weight={2} /></button>
        <Refresh aria-label="Refresh"><RefreshIcon /></Refresh>
      </Breadcrumbs>
      <SearchBox>
        <SearchInput aria-label="Search Administrative Tools" placeholder="Search Administrative Tools" />
        <SearchIcon />
      </SearchBox>
    </NavRow>
  );
}

function Places() {
  return (
    <Sidebar>
      {branches.map((branch, i) => (
        <Branch key={i}>
          {branch.map(({ name, icon: Glyph, root, current, pinned }) => (
            <li key={name}>
              <Place href="#place" $nested={!root} $current={current} $pinned={pinned}>
                <Glyph />
                <span>{name}</span>
                {pinned && <PinIcon />}
              </Place>
            </li>
          ))}
        </Branch>
      ))}
    </Sidebar>
  );
}

function FileList() {
  return (
    <ListPane>
      <FileTable>
        <thead>
          <tr>
            <ColumnHead $width={106} $inset={3}>
              Type
              <SortMark width="9" height="6" viewBox="0 0 9 6" fill="none"><path d="M.5 5l4-4 4 4" stroke="#666" /></SortMark>
            </ColumnHead>
            <ColumnHead $width={272}>Name</ColumnHead>
            <ColumnHead $width={120}>Date modified</ColumnHead>
            <ColumnHead $width={80}>Size</ColumnHead>
          </tr>
        </thead>
        <tbody>
          {files.map(({ kind, name, date, size, selected }, i) => (
            <FileRow key={i} $selected={selected}>
              <TypeCell><div><ShortcutIcon kind={kind} />Shortcut</div></TypeCell>
              <Cell $strong>{name}</Cell>
              <Cell $compact>{date}</Cell>
              <Cell $align="right">{size}</Cell>
            </FileRow>
          ))}
        </tbody>
      </FileTable>
    </ListPane>
  );
}

function OdbcDialog() {
  return (
    <Dialog role="dialog" aria-labelledby="odbc-title">
      <DialogHeader>
        <ToolboxIcon />
        <DialogTitle id="odbc-title">ODBC Data Source Administrator (64-bit)</DialogTitle>
        <DialogClose aria-label="Close"><CloseIcon /></DialogClose>
      </DialogHeader>
      <DialogBody>
        <Tabs role="tablist">
          {tabs.map(([name, width], i) => (
            <Tab key={name} role="tab" aria-selected={i === 0} $active={i === 0} $width={width}>{name}</Tab>
          ))}
        </Tabs>
        <TabPanel role="tabpanel">
          <PanelLabel>User Data Sources:</PanelLabel>
          <SourceArea>
            <SourceList>
              <SourceTable>
                <thead>
                  <tr>
                    <SourceHead $width={40}>Name</SourceHead>
                    <SourceHead $width={50}>Platform</SourceHead>
                    <SourceHead>Driver</SourceHead>
                  </tr>
                </thead>
              </SourceTable>
            </SourceList>
            <ActionColumn>
              <PushButton $hot>Add...</PushButton>
              <PushButton disabled>Remove</PushButton>
              <PushButton disabled>Configure...</PushButton>
            </ActionColumn>
          </SourceArea>
          <Info>
            <DataSourceIcon />
            <p>{infoText}</p>
          </Info>
        </TabPanel>
        <DialogActions>
          <PushButton $small $primary>OK</PushButton>
          <PushButton $small>Cancel</PushButton>
          <PushButton $small disabled>Apply</PushButton>
          <PushButton $small>Help</PushButton>
        </DialogActions>
      </DialogBody>
      <Pointer width="12" height="19" viewBox="0 0 12 19" aria-hidden="true">
        <path d="M.6.8v16l3.700-3.500 2.500 5.200 2.200-1-2.400-5.100h4.900z" fill="#fff" stroke="#000" strokeWidth="1" />
      </Pointer>
    </Dialog>
  );
}

export default function App() {
  return (
    <Frame>
      <GlobalStyle />
      <TitleBar>
        <IeIcon />
        <WindowTitle>PLABWIN10 - Internet Explorer</WindowTitle>
        <WindowButtons />
      </TitleBar>
      <UrlBar>
        <SiteIcon />
        <Url>
          <b>https</b>://dev.<b>practice-labs.com</b>
          /device-advanced.aspx?client=html&amp;device=1&amp;width=1024&amp;height=768&amp;login=true&amp;token=7R2RoEjdTS6UwYB0qWcgEGC2hMjJ8jiwSesClPyiwplPoN9teTl
        </Url>
        <LockIcon />
      </UrlBar>
      <ExplorerRibbon />
      <AddressRow />
      <Panes>
        <Places />
        <FileList />
      </Panes>
      <StatusBar>
        <StatusText $gap={9}>21 items</StatusText>
        <StatusText $bare>1 item selected</StatusText>
        <StatusText>1.11 KB</StatusText>
        <Spacer />
        <ViewButton $on aria-label="Details view"><DetailsIcon /></ViewButton>
        <ViewButton aria-label="Thumbnail view"><PicturesIcon /></ViewButton>
      </StatusBar>
      <Taskbar>
        <TaskButton $width={48} aria-label="Start"><WindowsIcon /></TaskButton>
        <TaskSearch>
          <CortanaIcon />
          <SearchInput $large aria-label="Type here to search" placeholder="Type here to search" />
          <MicIcon />
        </TaskSearch>
        <TaskButton aria-label="Task view"><TaskViewIcon /></TaskButton>
        <TaskButton $width={51} aria-label="File Explorer"><FolderIcon /></TaskButton>
        <TaskButton aria-label="Internet Explorer"><IeIcon size={24} /></TaskButton>
        <TaskButton aria-label="Server Manager"><ServerIcon /></TaskButton>
        <TaskButton $open $width={40} aria-label="Control Panel"><ControlPanelIcon /></TaskButton>
        <TaskButton $open $active $width={48} aria-label="ODBC Data Sources"><ToolboxIcon size={24} /></TaskButton>
        <Tray>
          <PeopleIcon />
          <NetTrayIcon />
          <span>ENG</span>
        </Tray>
      </Taskbar>
      <BadgeButton aria-label="Show controls"><PlusIcon /></BadgeButton>
      <OdbcDialog />
    </Frame>
  );
}
